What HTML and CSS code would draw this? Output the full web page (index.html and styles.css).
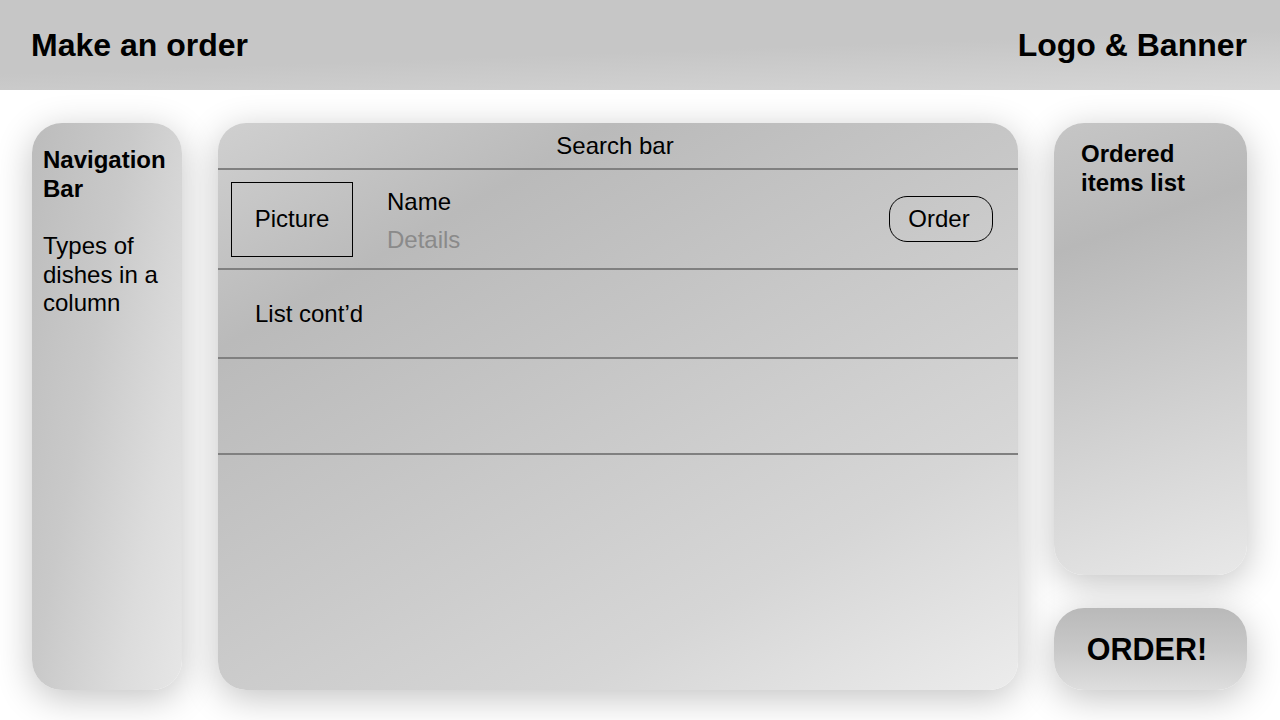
FILE: index.html
```html
<!DOCTYPE html>
<html lang="en">
<head>
<meta charset="utf-8">
<title>Make an order</title>
<link rel="stylesheet" href="styles.css">
</head>
<body>
<header class="topbar">
  <h1 class="title">Make an order</h1>
  <div class="brand">Logo &amp; Banner</div>
</header>
<main class="layout">
  <nav class="panel nav">
    <div class="panel-title">Navigation Bar</div>
    <p class="nav-text">Types of dishes in a column</p>
  </nav>
  <section class="panel menu">
    <div class="search">Search bar</div>
    <div class="row item">
      <div class="picture">Picture</div>
      <div class="info">
        <div class="name">Name</div>
        <div class="details">Details</div>
      </div>
      <button class="order-btn">Order</button>
    </div>
    <div class="row cont">List cont’d</div>
    <div class="row empty"></div>
  </section>
  <aside class="side">
    <div class="panel ordered">
      <div class="panel-title">Ordered items list</div>
    </div>
    <button class="panel order-all">ORDER!</button>
  </aside>
</main>
</body>
</html>
```
FILE: styles.css
```css
* { box-sizing: border-box; }
html, body { margin: 0; padding: 0; }
body {
  width: 1280px;
  height: 720px;
  overflow: hidden;
  background: #ffffff;
  font-family: "Liberation Sans", Arial, sans-serif;
  color: #000;
}
.topbar {
  height: 90px;
  display: flex;
  align-items: center;
  justify-content: space-between;
  padding: 0 33px 0 31px;
  background: linear-gradient(178deg, #c6c6c6 0%, #c6c6c6 55%, #d6d6d6 100%);
}
.title, .brand {
  margin: 0;
  font-size: 32px;
  font-weight: bold;
  line-height: 1.15;
}
.layout {
  display: flex;
  padding: 33px 33px 30px 32px;
  gap: 36px;
  height: 630px;
}
.panel {
  border-radius: 30px;
  box-shadow: 0 8px 36px rgba(0, 0, 0, 0.24);
}
.nav {
  width: 150px;
  flex: none;
  padding: 22px 8px 0 11px;
  background: linear-gradient(100deg, #bcbcbc 0%, #c9c9c9 40%, #dcdcdc 75%, #e6e6e6 100%);
}
.panel-title {
  font-size: 24px;
  font-weight: bold;
  line-height: 29px;
}
.nav-text {
  margin: 29px 0 0;
  font-size: 24px;
  line-height: 28.5px;
}
.menu {
  width: 800px;
  flex: none;
  overflow: hidden;
  border-radius: 28px;
  background: linear-gradient(150deg, #d0d0d0 0%, #bababa 22%, #c6c6c6 45%, #d6d6d6 75%, #ececec 100%);
}
.search {
  height: 47px;
  display: flex;
  align-items: center;
  justify-content: center;
  font-size: 24px;
  border-bottom: 2px solid #808080;
  padding: 0 6px 0 0;
}
.row {
  border-bottom: 2px solid #808080;
  font-size: 24px;
}
.item {
  height: 100px;
  display: flex;
  align-items: center;
  padding: 0 25px 0 13px;
}
.picture {
  width: 122px;
  height: 75px;
  border: 1px solid #000;
  display: flex;
  align-items: center;
  justify-content: center;
  flex: none;
}
.info {
  margin-left: 34px;
  flex: 1;
  padding-top: 3px;
}
.name, .details { line-height: 38px; }
.details { color: #8a8a8a; }
.order-btn {
  width: 104px;
  height: 46px;
  border: 1px solid #000;
  border-radius: 18px;
  background: transparent;
  font-family: inherit;
  font-size: 24px;
  color: #000;
  padding: 0 4px 0 0;
}
.cont {
  height: 89px;
  display: flex;
  align-items: center;
  padding-left: 37px;
}
.empty { height: 96px; }
.side {
  width: 193px;
  flex: none;
  display: flex;
  flex-direction: column;
  gap: 33px;
}
.ordered {
  height: 452px;
  padding: 16px 10px 0 27px;
  background: linear-gradient(160deg, #c6c6c6 0%, #b8b8b8 25%, #d2d2d2 65%, #e8e8e8 100%);
}
.order-all {
  height: 82px;
  border: none;
  border-radius: 30px;
  background: linear-gradient(180deg, #b9b9b9 0%, #c8c8c8 50%, #dedede 100%);
  font-family: inherit;
  font-size: 30.5px;
  font-weight: bold;
  color: #000;
  padding: 0 7px 0 0;
}
```
